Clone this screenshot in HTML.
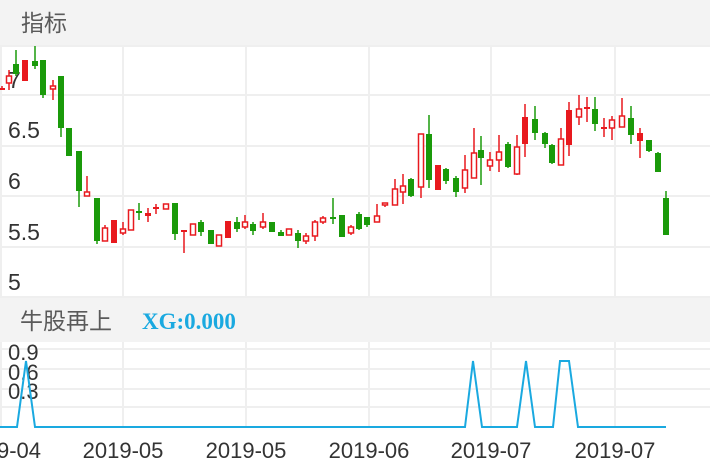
<!DOCTYPE html><html><head><meta charset="utf-8"><style>
body{margin:0;width:710px;height:472px;overflow:hidden;background:#fff;font-family:"Liberation Sans","Noto Sans CJK SC",sans-serif}
</style></head><body>
<svg width="710" height="472" xmlns="http://www.w3.org/2000/svg" style="position:absolute;left:0;top:0">
<rect x="0" y="0" width="710" height="45" fill="#f3f3f3"/>
<text x="21" y="31" font-size="23" fill="#5a5a5a" font-family="Liberation Sans,Noto Sans CJK SC,sans-serif">指标</text>
<g stroke="#efefef" stroke-width="2">
<line x1="0" y1="46" x2="710" y2="46"/><line x1="0" y1="95" x2="710" y2="95"/><line x1="0" y1="146" x2="710" y2="146"/><line x1="0" y1="196" x2="710" y2="196"/><line x1="0" y1="247" x2="710" y2="247"/><line x1="0" y1="297" x2="710" y2="297"/>
<line x1="1" y1="45" x2="1" y2="298"/><line x1="123" y1="45" x2="123" y2="298"/><line x1="246" y1="45" x2="246" y2="298"/><line x1="369" y1="45" x2="369" y2="298"/><line x1="491" y1="45" x2="491" y2="298"/><line x1="615" y1="45" x2="615" y2="298"/>
</g>
<g font-size="23" fill="#333">
<text x="8" y="88">7</text><text x="8" y="138">6.5</text><text x="8" y="189">6</text><text x="8" y="240">5.5</text><text x="8" y="290">5</text>
</g>
<g id="c"></g>
<rect x="0" y="298" width="710" height="44" fill="#f3f3f3"/>
<text x="20" y="329" font-size="23" fill="#5a5a5a" font-family="Liberation Sans,Noto Sans CJK SC,sans-serif">牛股再上</text>
<text x="142" y="329" font-size="23" font-weight="bold" fill="#1aa9e0" font-family="Liberation Serif,serif">XG:0.000</text>
<g stroke="#efefef" stroke-width="2">
<line x1="0" y1="349" x2="710" y2="349"/><line x1="0" y1="369" x2="710" y2="369"/><line x1="0" y1="389" x2="710" y2="389"/><line x1="0" y1="407" x2="710" y2="407"/>
<line x1="1" y1="342" x2="1" y2="428"/><line x1="123" y1="342" x2="123" y2="428"/><line x1="246" y1="342" x2="246" y2="428"/><line x1="369" y1="342" x2="369" y2="428"/><line x1="491" y1="342" x2="491" y2="428"/><line x1="615" y1="342" x2="615" y2="428"/>
</g>
<g font-size="22" fill="#333"><text x="8" y="360">0.9</text><text x="8" y="380">0.6</text><text x="8" y="399">0.3</text></g>
<polyline fill="none" stroke="#1aa9e0" stroke-width="2" points="0,427 17,427 26,361 35,427 465,427 473,361 482,427 517,427 526,361 535,427 553,427 560,361 569,361 578,427 666,427"/>
<g font-size="22" fill="#333">
<text x="-3" y="458">9-04</text><text x="123" y="458" text-anchor="middle">2019-05</text><text x="246" y="458" text-anchor="middle">2019-05</text><text x="369" y="458" text-anchor="middle">2019-06</text><text x="491" y="458" text-anchor="middle">2019-07</text><text x="615" y="458" text-anchor="middle">2019-07</text>
</g>
</svg>
<script>
var d=[
[2,86,90,88,89,'r'],[9,70,90,76,83,'h'],[16,50,76,64,74,'g'],[25,60,81,60,81,'r'],[35,46,69,61,66,'g'],[43,60,98,60,95,'g'],[53,80,100,86,89,'h'],[61,76,137,76,128,'g'],[69,128,156,128,156,'g'],[79,151,207,151,191,'g'],[87,176,196,192,196,'h'],[97,198,244,198,241,'g'],[105,225,241,228,241,'h'],[114,220,243,220,243,'r'],[123,222,235,229,233,'h'],[131,210,230,210,230,'h'],[139,203,220,211,213,'g'],[148,208,222,213,216,'r'],[156,204,214,207,209,'r'],[166,204,209,204,209,'h'],[175,203,240,203,234,'g'],[184,230,253,230,232,'r'],[193,224,235,224,235,'h'],[201,220,236,222,232,'g'],[211,230,244,230,244,'g'],[219,235,246,235,246,'h'],[228,221,238,221,238,'r'],[237,217,232,222,229,'g'],[245,215,229,222,227,'h'],[253,222,235,224,231,'g'],[263,213,229,222,227,'h'],[272,222,232,222,232,'g'],[281,230,236,232,236,'g'],[289,229,235,229,235,'h'],[298,230,248,233,241,'g'],[306,233,244,236,241,'h'],[315,220,241,222,236,'h'],[323,216,224,218,222,'h'],[333,198,224,217,219,'g'],[342,215,237,215,237,'g'],[351,225,235,227,233,'h'],[359,212,230,214,229,'g'],
[367,217,227,217,225,'g'],[377,204,222,216,222,'h'],[385,203,207,203,205,'h'],[395,179,205,189,205,'h'],[403,174,204,186,192,'h'],[411,178,197,179,196,'g'],[421,134,198,134,187,'h'],[429,115,188,134,180,'g'],[438,165,190,165,190,'r'],[446,168,184,169,181,'g'],[456,176,197,178,192,'g'],[465,155,193,170,188,'h'],[474,128,178,153,178,'h'],[481,136,185,150,158,'g'],[490,152,171,160,166,'h'],[499,135,172,152,160,'h'],[508,142,168,144,167,'g'],[517,135,175,147,174,'h'],[525,104,157,117,144,'r'],[535,106,140,119,133,'g'],[545,132,148,133,144,'g'],[552,144,164,145,163,'g'],[561,128,165,139,165,'h'],[569,102,156,110,145,'r'],[579,95,125,109,117,'h'],[587,97,122,107,109,'r'],[595,97,131,109,124,'g'],[604,118,137,127,128,'r'],[612,116,140,120,128,'h'],[622,98,127,116,127,'h'],[631,106,144,118,135,'g'],[640,128,158,133,141,'r'],[649,140,152,140,151,'g'],[658,152,172,153,172,'g'],[666,191,235,198,235,'g']];
var s='';d.forEach(function(c){var x=c[0],col=c[5]=='g'?'#1a9a0a':'#e8191e';
s+='<line x1="'+x+'" y1="'+c[1]+'" x2="'+x+'" y2="'+c[2]+'" stroke="'+col+'" stroke-width="1.5"/>';
var h=Math.max(c[4]-c[3],2);
if(c[5]=='h')s+='<rect x="'+(x-2.5)+'" y="'+c[3]+'" width="5" height="'+h+'" fill="#fff" stroke="'+col+'" stroke-width="1.5"/>';
else s+='<rect x="'+(x-3)+'" y="'+c[3]+'" width="6" height="'+h+'" fill="'+col+'"/>';});
document.getElementById('c').innerHTML=s;
</script>
</body></html>
